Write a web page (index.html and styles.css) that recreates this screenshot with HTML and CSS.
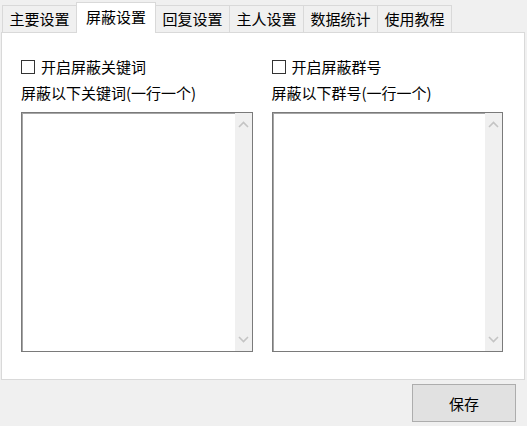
FILE: index.html
```html
<!DOCTYPE html>
<html lang="zh-CN">
<head>
    <meta charset="UTF-8">
    <title>屏蔽设置</title>
    <link rel="stylesheet" href="styles.css">
</head>
<body>
    <div class="tabs">
        <div class="tab">主要设置</div>
        <div class="tab active">屏蔽设置</div>
        <div class="tab">回复设置</div>
        <div class="tab">主人设置</div>
        <div class="tab">数据统计</div>
        <div class="tab">使用教程</div>
    </div>

    <div class="panel">
        <div class="column">
            <label class="check-row">
                <input type="checkbox" class="check">
                <span>开启屏蔽关键词</span>
            </label>
            <div class="field-label">屏蔽以下关键词(一行一个)</div>
            <div class="text-box">
                <textarea class="text-input"></textarea>
                <div class="scrollbar">
                    <svg width="11" height="7" viewBox="0 0 11 7"><path d="M1 6 L5.5 1.5 L10 6" fill="none" stroke="#c4c4c4" stroke-width="1.6"/></svg>
                    <svg width="11" height="7" viewBox="0 0 11 7"><path d="M1 1 L5.5 5.5 L10 1" fill="none" stroke="#c4c4c4" stroke-width="1.6"/></svg>
                </div>
            </div>
        </div>
        <div class="column">
            <label class="check-row">
                <input type="checkbox" class="check">
                <span>开启屏蔽群号</span>
            </label>
            <div class="field-label">屏蔽以下群号(一行一个)</div>
            <div class="text-box">
                <textarea class="text-input"></textarea>
                <div class="scrollbar">
                    <svg width="11" height="7" viewBox="0 0 11 7"><path d="M1 6 L5.5 1.5 L10 6" fill="none" stroke="#c4c4c4" stroke-width="1.6"/></svg>
                    <svg width="11" height="7" viewBox="0 0 11 7"><path d="M1 1 L5.5 5.5 L10 1" fill="none" stroke="#c4c4c4" stroke-width="1.6"/></svg>
                </div>
            </div>
        </div>
    </div>

    <div class="footer">
        <button class="save-button">保存</button>
    </div>
</body>
</html>
```

FILE: styles.css
```css
body {
    margin: 0;
    background: #f0f0f0;
    font-family: "Microsoft YaHei", "Noto Sans CJK SC", sans-serif;
    font-size: 15px;
    color: #000;
    width: 527px;
    height: 426px;
    overflow: hidden;
}
.tabs {
    display: flex;
    align-items: flex-end;
    height: 32px;
    padding-left: 2px;
}
.tab {
    box-sizing: border-box;
    width: 75px;
    height: 27px;
    margin-left: -1px;
    border: 1px solid #d9d9d9;
    border-bottom: none;
    background: #f0f0f0;
    text-align: center;
    line-height: 25px;
}
.tab:first-child {
    margin-left: 0;
}
.tab.active {
    position: relative;
    z-index: 1;
    width: 80px;
    height: 31px;
    margin-bottom: -1px;
    background: #fff;
    line-height: 28px;
}
.tab.active + .tab {
    margin-left: -1px;
}
.panel {
    box-sizing: border-box;
    display: flex;
    gap: 19px;
    width: 524px;
    height: 348px;
    margin-left: 1px;
    padding: 27px 21px 0 19px;
    background: #fff;
    border: 1px solid #d9d9d9;
}
.column {
    flex: 1;
    display: flex;
    flex-direction: column;
}
.check-row {
    display: flex;
    align-items: center;
    height: 14px;
    line-height: 14px;
}
.check {
    appearance: none;
    box-sizing: border-box;
    width: 14px;
    height: 14px;
    margin: 0 6px 0 0;
    border: 1px solid #333;
    background: #fff;
}
.field-label {
    margin-top: 11px;
    height: 16px;
    line-height: 16px;
}
.text-box {
    box-sizing: border-box;
    display: flex;
    height: 240px;
    margin-top: 11px;
    border: 1px solid #7a7a7a;
    box-shadow: inset 1px 1px 0 #a6a6a6;
    background: #fff;
}
.text-input {
    flex: 1;
    border: none;
    outline: none;
    resize: none;
    background: transparent;
    overflow: hidden;
    font: inherit;
}
.scrollbar {
    width: 17px;
    background: #f0f0f0;
    display: flex;
    flex-direction: column;
    justify-content: space-between;
    align-items: center;
    padding: 8px 0;
}
.footer {
    display: flex;
    justify-content: flex-end;
    padding: 4px 11px 0 0;
}
.save-button {
    width: 104px;
    height: 38px;
    background: #e1e1e1;
    border: 1px solid #adadad;
    font: inherit;
    color: #000;
}
```
